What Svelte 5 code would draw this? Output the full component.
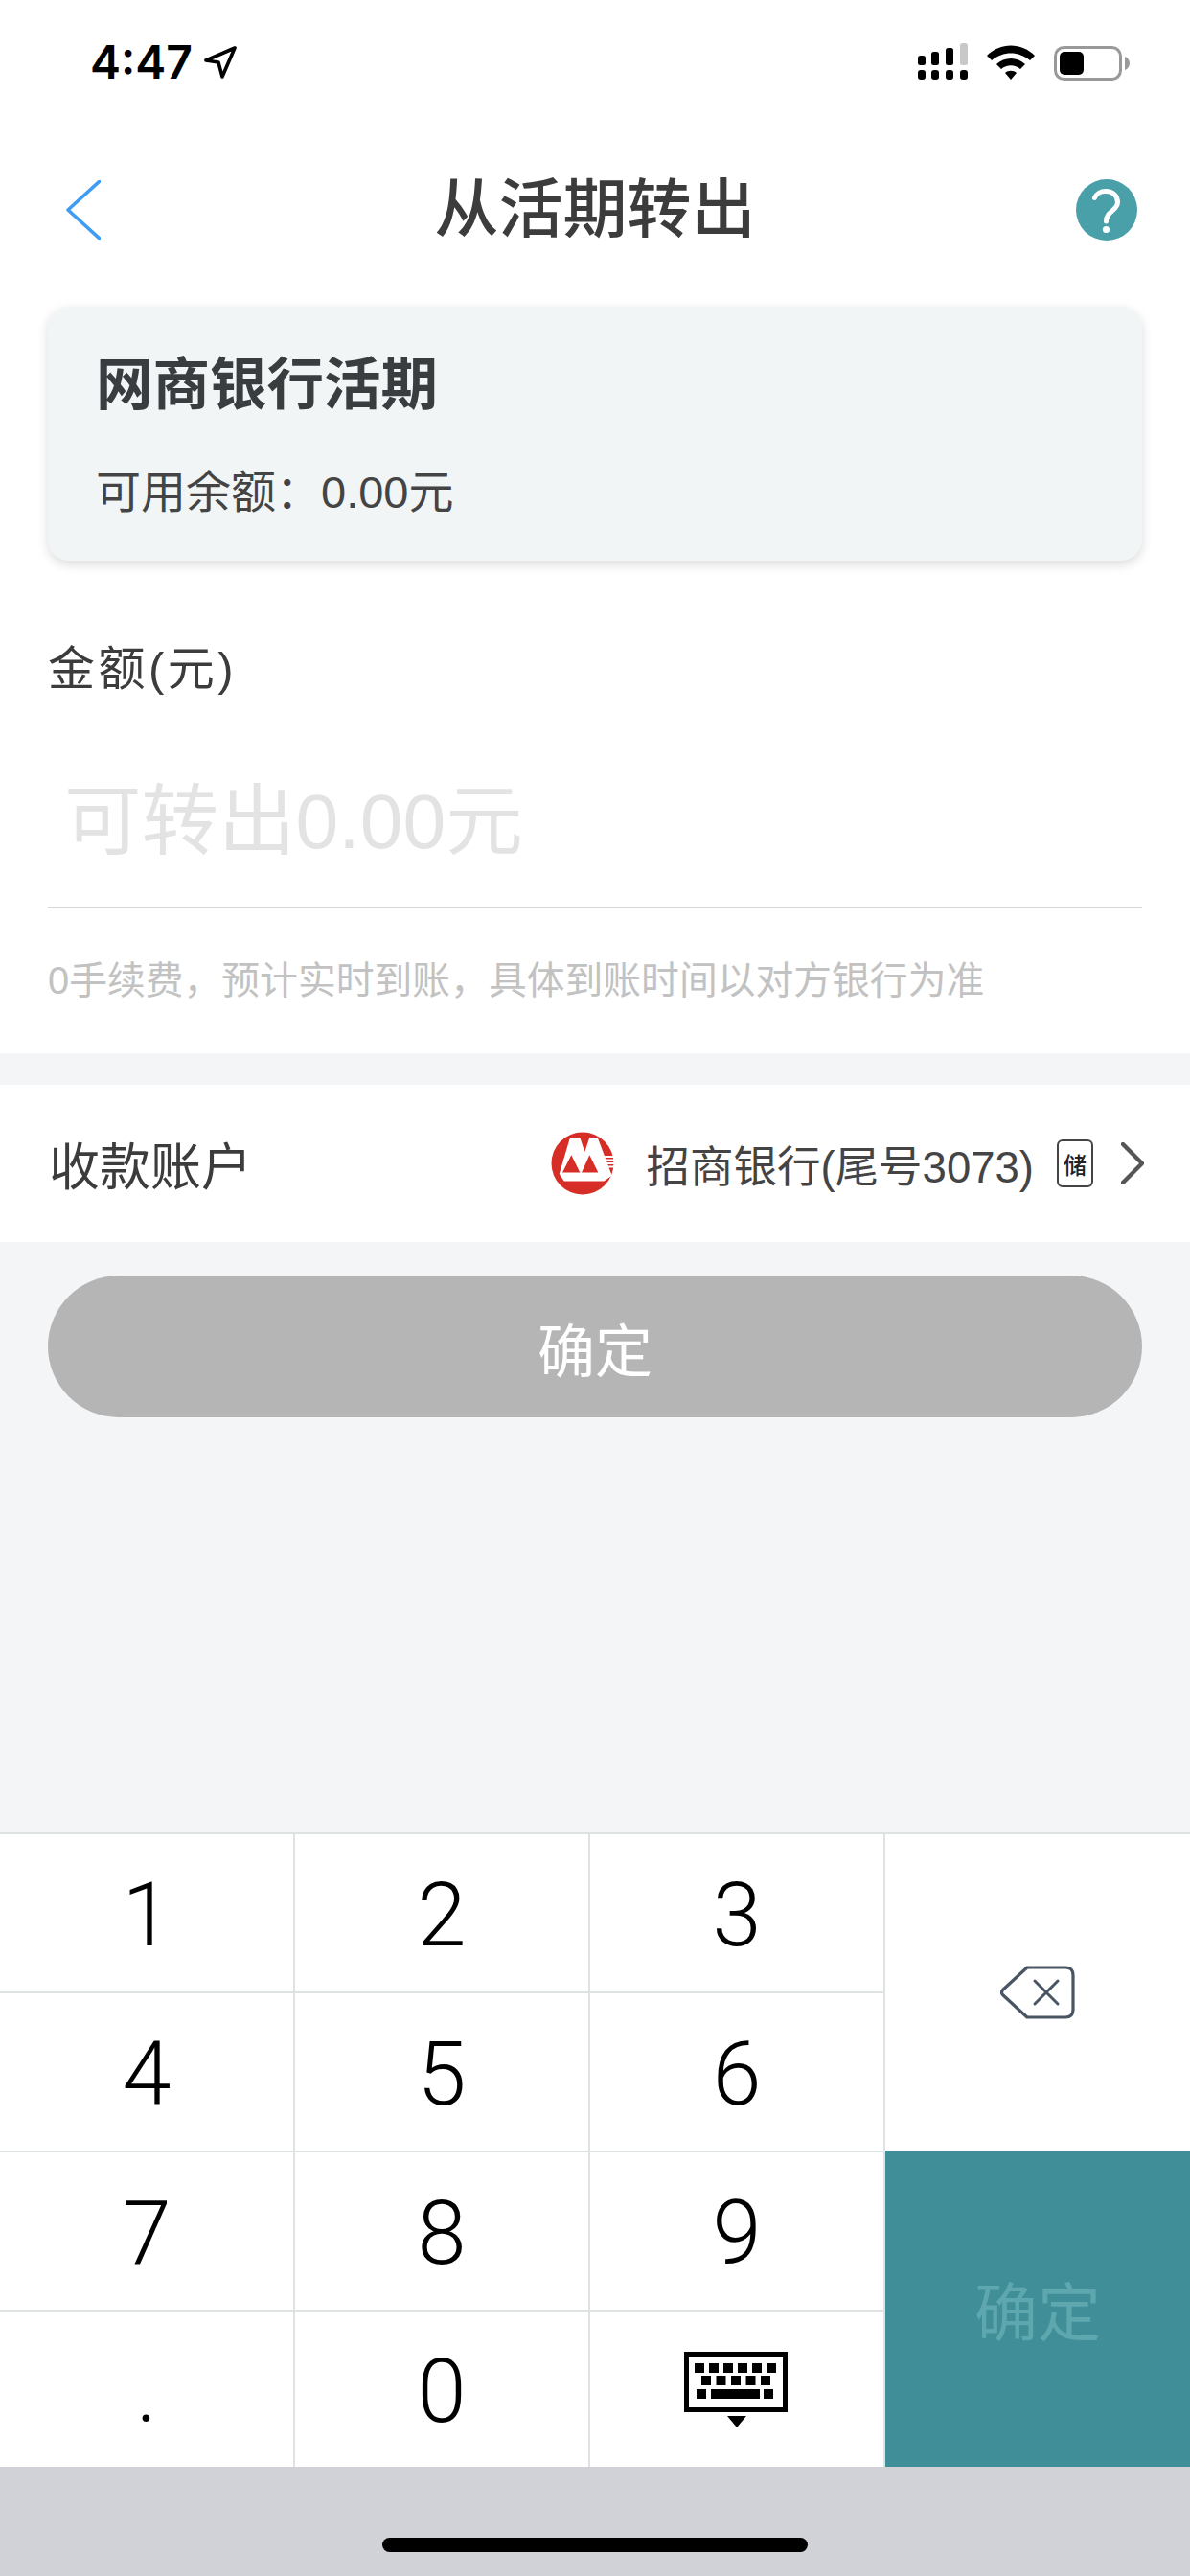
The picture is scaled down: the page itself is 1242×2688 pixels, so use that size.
<script>
	const digits = ['1', '2', '3', '4', '5', '6', '7', '8', '9', '.', '0'];
	const topKeys = [0, 1, 2, 3, 4, 5];
	const midKeys = [0, 1, 2, 3, 4];
	const bars = [
		{ x: 0, y: 13, h: 10 },
		{ x: 14, y: 9, h: 14 },
		{ x: 29, y: 5, h: 18 },
		{ x: 44, y: 0, h: 23 }
	];
</script>

<div class="page">
	<header class="status">
		<div class="time">
			<span>4:47</span>
			<svg class="loc" viewBox="0 0 34 34" width="34" height="34">
				<path d="M32 2 L2 15 L15 17 L19 32 Z" fill="none" stroke="#000" stroke-width="3.6" stroke-linejoin="round" />
			</svg>
		</div>
		<div class="status-icons">
			<svg viewBox="0 0 52 38" width="52" height="38">
				{#each bars as b, i}
					<rect x={b.x} y={b.y} width="8" height={b.h} rx="2.5" fill={i === 3 ? '#c8c8c8' : '#000'} />
					<rect x={b.x} y="28" width="8" height="10" rx="3" />
				{/each}
			</svg>
			<svg class="wifi" viewBox="0 0 50 36" width="50" height="36">
				<path d="M0 11 C14 -3 36 -3 50 11 L45 16 C33 6 17 6 5 16 Z" />
				<path d="M10 20 C18 12 32 12 40 20 L35 25 C29 20 21 20 15 25 Z" />
				<path d="M19 29 C22 26 28 26 31 29 L25 36 Z" />
			</svg>
			<svg class="battery" viewBox="0 0 79 36" width="79" height="36">
				<rect x="1.5" y="1.5" width="68" height="33" rx="9" fill="#fff" stroke="#999" stroke-width="3" />
				<rect x="6" y="6" width="25" height="24" rx="5" />
				<path d="M74 11 C77 12 79 15 79 18 C79 21 77 24 74 25 Z" fill="#999" />
			</svg>
		</div>
	</header>

	<nav class="nav">
		<svg class="back" viewBox="0 0 36 62" width="36" height="62">
			<path d="M35 1 L2 31 L35 61" fill="none" stroke="#3f9cf5" stroke-width="3.6" stroke-linecap="round" stroke-linejoin="round" />
		</svg>
		<h1>从活期转出</h1>
		<svg class="help" viewBox="0 0 64 64" width="64" height="64">
			<circle cx="32" cy="32" r="32" fill="#4aa0a9" />
			<path d="M19.5 19.5 C21 15 26 12.5 31 12.5 C38 12.5 43.5 17 43.5 24 C43.5 33 31.5 33 31.5 44" fill="none" stroke="#fff" stroke-width="5" stroke-linecap="round" />
			<circle cx="31.5" cy="52.5" r="3.6" fill="#fff" />
		</svg>
	</nav>

	<section class="content">
		<div class="card">
			<h2>网商银行活期</h2>
			<p>可用余额：0.00元</p>
		</div>
		<div class="label">金额(元)</div>
		<div class="input">可转出0.00元</div>
		<div class="hint">0手续费，预计实时到账，具体到账时间以对方银行为准</div>
	</section>

	<section class="account">
		<span class="account-label">收款账户</span>
		<div class="account-value">
			<svg class="logo" viewBox="0 0 66 66" width="66" height="66">
				<circle cx="33" cy="33" r="32.5" fill="#d62e27" />
				<path d="M8.7 44 L20 6 H30.3 L35.3 21 L40.3 6 H48.7 L63.7 45.8 L55.3 51.5 H13.7 Z" fill="#fff" />
				<path d="M12 42.5 L21.3 24.2 L30.3 42.5 Z M32 42.5 L40.3 24.2 L49.3 42.5 Z" fill="#d62e27" />
				<path d="M50 26 H66 M51 29.5 H66 M52 33 H66 M53 36.5 H66" stroke="#fff" stroke-width="2" />
			</svg>
			<span class="bank">招商银行(尾号3073)</span>
			<span class="tag">储</span>
			<svg class="chevron" viewBox="0 0 24 44" width="24" height="44">
				<path d="M2 2 L22 22 L2 42" fill="none" stroke="#555" stroke-width="4.4" stroke-linecap="round" stroke-linejoin="round" />
			</svg>
		</div>
	</section>

	<div class="action">
		<button class="submit">确定</button>
	</div>

	<div class="spacer"></div>

	<section class="keyboard">
		{#each digits as d}
			<div class="key">{d}</div>
		{/each}
		<div class="key icon">
			<svg viewBox="0 0 110 64" width="110" height="64">
				<rect x="0" y="0" width="108" height="63" fill="#000" />
				<rect x="5" y="5" width="98" height="53" fill="#fff" />
				{#each topKeys as i}
					<rect x={11 + i * 15} y="12" width="10" height="10" fill="#000" />
				{/each}
				{#each midKeys as i}
					<rect x={18 + i * 15.5} y="25" width="10" height="10" fill="#000" />
				{/each}
				<rect x="13" y="39" width="10" height="10" fill="#000" />
				<rect x="28" y="39" width="51" height="10" fill="#000" />
				<rect x="83" y="39" width="10" height="10" fill="#000" />
			</svg>
			<svg class="down" viewBox="0 0 20 12" width="20" height="12">
				<path d="M0 0 H20 L10 12 Z" fill="#000" />
			</svg>
		</div>
		<div class="del">
			<svg viewBox="0 0 78 56" width="78" height="56">
				<path d="M28 2 H68 Q76 2 76 10 V46 Q76 54 68 54 H28 L3 31 Q0 28 3 25 Z" fill="none" stroke="#4a5563" stroke-width="3.2" stroke-linejoin="round" />
				<path d="M36 16 L60 40 M60 16 L36 40" stroke="#4a5563" stroke-width="3" stroke-linecap="round" />
			</svg>
		</div>
		<div class="ok">确定</div>
	</section>

	<footer class="home">
		<div class="home-bar"></div>
	</footer>
</div>

<style>
	:global(body) {
		margin: 0;
		background: #fff;
	}

	.page {
		width: 1242px;
		height: 2688px;
		display: flex;
		flex-direction: column;
		background: #f4f5f7;
		font-family: "Liberation Sans", "Noto Sans CJK SC", sans-serif;
		color: #3c3c3c;
		overflow: hidden;
	}

	.status {
		height: 132px;
		flex: none;
		box-sizing: border-box;
		padding: 45px 63px 0 94px;
		display: flex;
		justify-content: space-between;
		align-items: flex-start;
		background: #fff;
	}

	.time {
		display: flex;
		align-items: center;
		gap: 12px;
		font-family: Inter, sans-serif;
		font-weight: 600;
		font-size: 48px;
		line-height: 40px;
		color: #000;
	}

	.status-icons {
		display: flex;
		align-items: flex-start;
		gap: 20px;
	}

	.wifi {
		margin-top: 2px;
	}

	.battery {
		margin-top: 3px;
	}

	.nav {
		height: 188px;
		flex: none;
		box-sizing: border-box;
		padding: 0 55px 14px;
		display: grid;
		grid-template-columns: 1fr auto 1fr;
		align-items: center;
		background: #fff;
	}

	.back {
		margin-left: 14px;
	}

	.help {
		justify-self: end;
	}

	.nav h1 {
		margin: 0;
		font-size: 67px;
		font-weight: 500;
		line-height: 80px;
		color: #3c3c3c;
	}

	.content {
		flex: none;
		box-sizing: border-box;
		padding: 0 50px 51px;
		background: #fff;
	}

	.card {
		box-sizing: border-box;
		height: 265px;
		padding: 47px 50px 0;
		border-radius: 22px;
		background: #f2f5f6;
		box-shadow: 0 4px 12px rgba(0, 0, 0, 0.14);
	}

	.card h2 {
		margin: 0;
		font-size: 59.5px;
		font-weight: 700;
		line-height: 70px;
		color: #3a3d3f;
	}

	.card p {
		margin: 49px 0 0;
		font-size: 47px;
		line-height: 56px;
		color: #444;
	}

	.label {
		margin-top: 83px;
		font-size: 49px;
		letter-spacing: 3.5px;
		line-height: 60px;
		color: #3c3c3c;
	}

	.input {
		box-sizing: border-box;
		margin-top: 83px;
		height: 137px;
		padding-left: 17px;
		font-size: 80.5px;
		line-height: 92px;
		color: #e3e3e3;
		border-bottom: 2px solid #d8d8d8;
	}

	.hint {
		margin-top: 50px;
		font-size: 39.8px;
		line-height: 50px;
		color: #c2c2c2;
	}

	.account {
		flex: none;
		height: 164px;
		margin-top: 33px;
		box-sizing: border-box;
		padding: 0 48px 0 51px;
		background: #fff;
		display: flex;
		align-items: center;
		justify-content: space-between;
	}

	.account-label {
		font-size: 53px;
		color: #3c3c3c;
	}

	.account-value {
		display: flex;
		align-items: center;
	}

	.bank {
		margin-left: 33px;
		font-size: 45.5px;
		color: #444;
	}

	.tag {
		margin-left: 24px;
		box-sizing: border-box;
		width: 38px;
		height: 50px;
		border: 2px solid #444;
		border-radius: 6px;
		display: flex;
		align-items: center;
		justify-content: center;
		font-size: 24px;
		font-weight: 500;
		color: #222;
	}

	.chevron {
		margin-left: 29px;
	}

	.action {
		flex: none;
		padding: 35px 50px 0;
	}

	.submit {
		display: block;
		width: 100%;
		height: 148px;
		border: none;
		border-radius: 74px;
		background: #b5b5b5;
		color: #fff;
		font-family: inherit;
		font-size: 60px;
	}

	.spacer {
		flex: 1;
	}

	.keyboard {
		flex: none;
		display: grid;
		grid-template-columns: 306px 306px 306px 318px;
		grid-template-rows: 164px 164px 164px 162px;
		gap: 2px;
		padding-top: 2px;
		background: #dfe2e3;
	}

	.key {
		box-sizing: border-box;
		padding-top: 4px;
		background: #fff;
		display: flex;
		flex-direction: column;
		align-items: center;
		justify-content: center;
		gap: 3px;
		font-family: Roboto, sans-serif;
		font-weight: 300;
		font-size: 92px;
		color: #000;
	}

	.key.icon {
		padding-top: 0;
	}

	.del {
		grid-column: 4;
		grid-row: 1 / 3;
		background: #fff;
		display: flex;
		align-items: center;
		justify-content: center;
	}

	.ok {
		grid-column: 4;
		grid-row: 3 / 5;
		background: #408e98;
		color: #5fa7ae;
		font-size: 66px;
		display: flex;
		align-items: center;
		justify-content: center;
		margin-top: -2px;
		padding-bottom: 2px;
	}

	.home {
		flex: none;
		height: 114px;
		box-sizing: border-box;
		padding-top: 74px;
		background: #d1d2d7;
		display: flex;
		justify-content: center;
	}

	.home-bar {
		width: 444px;
		height: 15px;
		border-radius: 8px;
		background: #000;
	}
</style>
